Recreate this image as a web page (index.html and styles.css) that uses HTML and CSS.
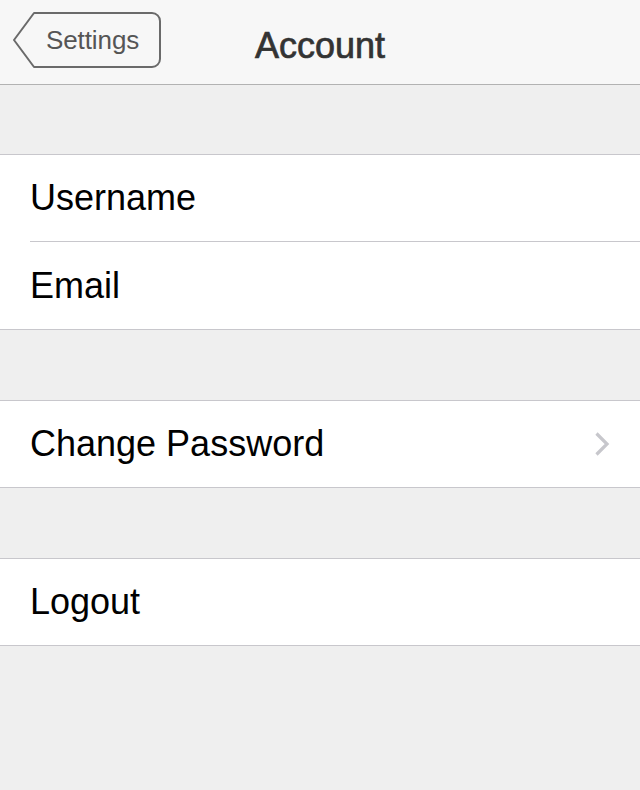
FILE: index.html
```html
<!DOCTYPE html>
<html>
<head>
<meta charset="utf-8">
<link rel="stylesheet" href="styles.css">
</head>
<body>
<header class="nav">
  <div class="nav-left">
    <a class="back-btn">
      <svg class="back-shape" width="150" height="60" viewBox="0 0 150 60"><path d="M22 3 H140 A8 8 0 0 1 148 11 V49 A8 8 0 0 1 140 57 H22 L2 30 Z" fill="none" stroke="#6a6a6a" stroke-width="2" stroke-linejoin="round"/></svg>
      <span class="back-label">Settings</span>
    </a>
  </div>
  <h1 class="nav-title">Account</h1>
  <div class="nav-right"></div>
</header>
<main class="content">
  <section class="group group-first">
    <div class="row">Username</div>
    <div class="sep"></div>
    <div class="row row-tall">Email</div>
  </section>
  <section class="group">
    <div class="row row-link">Change Password
      <svg class="chevron" width="16" height="26" viewBox="0 0 16 26"><path d="M2.5 2.5 L13 13 L2.5 23.5" fill="none" stroke="#c7c7cc" stroke-width="3.2"/></svg>
    </div>
  </section>
  <section class="group">
    <div class="row">Logout</div>
  </section>
</main>
</body>
</html>
```
FILE: styles.css
```css
html, body {
  margin: 0;
  padding: 0;
}
body {
  width: 640px;
  height: 790px;
  background: #efefef;
  font-family: "Liberation Sans", Arial, sans-serif;
  overflow: hidden;
}
.nav {
  height: 84px;
  background: #f7f7f7;
  border-bottom: 1px solid #b2b2b2;
  display: grid;
  grid-template-columns: 1fr auto 1fr;
  align-items: center;
}
.nav-left {
  display: flex;
  align-items: center;
  padding-left: 12px;
  padding-bottom: 4px;
}
.back-btn {
  position: relative;
  width: 150px;
  height: 60px;
  display: flex;
  align-items: center;
  justify-content: flex-start;
  padding-left: 34px;
  box-sizing: border-box;
}
.back-shape {
  position: absolute;
  left: 0;
  top: 0;
}
.back-label {
  position: relative;
  font-size: 26px;
  color: #555555;
  letter-spacing: -0.1px;
}
.nav-title {
  margin: 0;
  padding-top: 8px;
  font-size: 36px;
  font-weight: normal;
  color: #333333;
  -webkit-text-stroke: 0.7px #333333;
}
.content {
  display: flex;
  flex-direction: column;
}
.group {
  margin-top: 70px;
  background: #ffffff;
  border-top: 1px solid #c8c7cc;
  border-bottom: 1px solid #c8c7cc;
}
.group-first {
  margin-top: 69px;
}
.row {
  height: 86px;
  display: flex;
  align-items: center;
  padding-left: 30px;
  padding-right: 30px;
  font-size: 36px;
  color: #000000;
}
.row-tall {
  height: 87px;
}
.sep {
  height: 1px;
  margin-left: 30px;
  background: #c8c7cc;
}
.row-link {
  justify-content: space-between;
}
.chevron {
  flex: none;
}
```
